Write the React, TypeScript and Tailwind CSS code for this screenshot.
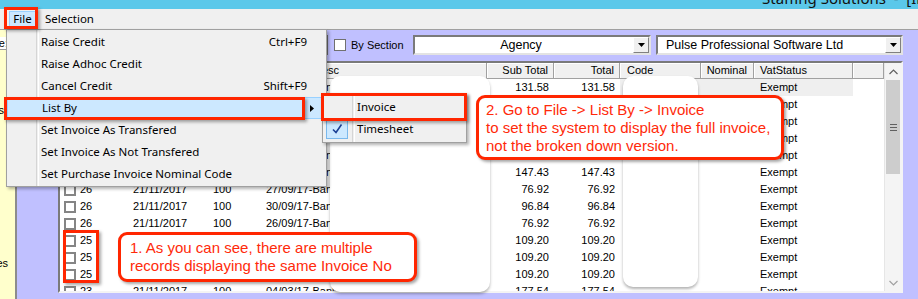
import { Fragment } from "react";

type Row = { no: string; desc: string; sub: string };

const ROWS: Row[] = [
  { no: "27", desc: "20/09/17-Bank", sub: "131.58" },
  { no: "27", desc: "21/09/17-Bank", sub: "147.43" },
  { no: "27", desc: "22/09/17-Bank", sub: "96.84" },
  { no: "27", desc: "23/09/17-Bank", sub: "76.92" },
  { no: "27", desc: "24/09/17-Bank", sub: "131.58" },
  { no: "26", desc: "25/09/17-Bank", sub: "147.43" },
  { no: "26", desc: "27/09/17-Bank", sub: "76.92" },
  { no: "26", desc: "30/09/17-Bank", sub: "96.84" },
  { no: "26", desc: "26/09/17-Bank", sub: "76.92" },
  { no: "25", desc: "01/10/17-Bank", sub: "109.20" },
  { no: "25", desc: "02/10/17-Bank", sub: "109.20" },
  { no: "25", desc: "03/10/17-Bank", sub: "109.20" },
  { no: "23", desc: "04/03/17-Bank", sub: "177.54" },
];

const HEADERS = [
  { label: "Inv No", w: "w-[68px]", cls: "pl-[5px]" },
  { label: "Date", w: "w-[75px]", cls: "pl-[5px]" },
  { label: "Hours", w: "w-[57px]", cls: "pl-[5px]" },
  { label: "Period", w: "w-[49px]", cls: "pl-[5px]" },
  { label: "Desc", w: "w-[178px]", cls: "pl-[5px]" },
  { label: "Sub Total", w: "w-[67px]", cls: "justify-end pr-[5px]" },
  { label: "Total", w: "w-[66px]", cls: "justify-end pr-[5px]" },
  { label: "Code", w: "w-[81px]", cls: "pl-[7px]" },
  { label: "Nominal", w: "w-[53px]", cls: "justify-end pr-[6px]" },
  { label: "VatStatus", w: "w-[99px]", cls: "pl-[6px]" },
  { label: "", w: "w-[31px]", cls: "" },
];

const MENU = [
  { label: "Raise Credit", key: "Ctrl+F9" },
  { label: "Raise Adhoc Credit" },
  { label: "Cancel Credit", key: "Shift+F9" },
  { label: "List By", sub: true },
  { label: "Set Invoice As Transfered" },
  { label: "Set Invoice As Not Transfered" },
  { label: "Set Purchase Invoice Nominal Code" },
];

const RED = "border-[3px] border-[#ff2600] shadow-[2px_2px_3px_rgba(0,0,0,0.35)]";

function DropButton() {
  return (
    <div className="w-[16px] h-[16px] bg-[#f0f0f0] border border-t-white border-l-white border-b-[#808080] border-r-[#808080] flex items-center justify-center">
      <svg width="7" height="4" viewBox="0 0 7 4">
        <path d="M0 0h7L3.5 4z" fill="#000" />
      </svg>
    </div>
  );
}

function Combo({ text, center, width }: { text: string; center?: boolean; width: string }) {
  return (
    <div className={`${width} h-[20px] bg-white border-2 border-t-[#7a7a7a] border-l-[#7a7a7a] border-b-[#e3e3e3] border-r-[#e3e3e3] flex items-center`}>
      <div className={`flex-1 text-[12.5px] text-black whitespace-nowrap ${center ? "text-center pr-[6px]" : "pl-[8px]"}`}>{text}</div>
      <DropButton />
    </div>
  );
}

function Check() {
  return <div className="w-[12px] h-[12px] border-2 border-[#858585] bg-white shrink-0" />;
}

export default function App() {
  return (
    <div className="relative w-[918px] h-[299px] overflow-hidden bg-[#f0f0f0] font-['Liberation_Sans',Arial,sans-serif] text-black">
      {/* title bar */}
      <div className="h-[9px] bg-[#5bc8ea] overflow-hidden">
        <div className="pl-[762px] mt-[-12px] whitespace-nowrap font-['Noto_Sans',sans-serif] text-[15px] leading-[20px] text-[#111]">
          Staffing Solutions&nbsp;&nbsp;-&nbsp;&nbsp;[Invoices]
        </div>
      </div>

      {/* menu bar */}
      <div className="h-[20px] flex items-center font-['Noto_Sans',sans-serif] text-[11.5px]">
        <div className="ml-[9px] w-[27px] h-[17px] bg-[#cce8ff] border border-[#99d1ff] flex items-center justify-center">File</div>
        <div className="ml-[9px]">Selection</div>
      </div>
      <div className="h-px bg-[#a0a0a0]" />

      {/* body */}
      <div className="flex h-[269px]">
        <div className="w-[17px] bg-[#ffffcc] border-r-2 border-[#8c8c8c] text-[11px] overflow-hidden">
          <div className="mt-[7px] h-[13px] bg-white border-b border-[#9a9a9a] flex justify-end overflow-hidden pr-[7px] leading-[13px] whitespace-nowrap">Date:</div>
          <div className="mt-[54px] flex justify-end overflow-hidden pr-[11px] leading-[13px] whitespace-nowrap">Invoices</div>
          <div className="mt-[140px] flex justify-end overflow-hidden pr-[7px] leading-[13px] whitespace-nowrap">Invoice Types</div>
        </div>

        <div className="flex-1 bg-[#c0c0ff] pl-[41px] pt-[5px]">
          {/* toolbar */}
          <div className="h-[20px] flex items-center">
            <div className="ml-[240px] w-[30px] h-[20px] bg-[#f0f0f0] border border-[#6e6e6e]" />
            <div className="w-[85px] flex items-center pl-[6px]">
              <div className="w-[12px] h-[12px] bg-white border border-[#707070]" />
              <span className="ml-[5px] text-[11px]">By Section</span>
            </div>
            <Combo text="Agency" center width="w-[238px]" />
            <div className="w-[5px]" />
            <Combo text="Pulse Professional Software Ltd" width="w-[247px]" />
          </div>

          {/* grid */}
          <div className="mt-[6px] w-[845px] h-[232px] bg-white border-2 border-t-[#7a7a7a] border-l-[#7a7a7a] border-b-[#f4f4f4] border-r-[#f4f4f4] flex overflow-hidden">
            <div className="w-[824px] overflow-hidden text-[11px]">
              <div className="flex h-[16px]">
                {HEADERS.map((h, i) => (
                  <div key={i} className={`${h.w} shrink-0 h-[16px] flex items-center bg-[#f0f0f0] border-r border-b border-[#a0a0a0] shadow-[inset_1px_1px_0_#ffffff] whitespace-nowrap ${h.cls}`}>
                    {h.label}
                  </div>
                ))}
              </div>
              {ROWS.map((r, i) => (
                <div key={i} className="flex h-[17px] leading-[17px] whitespace-nowrap">
                  <div className="w-[68px] shrink-0 flex items-center pl-[4px] gap-[4px]">
                    <Check />
                    <span>{r.no}</span>
                  </div>
                  <div className="w-[75px] shrink-0 pl-[5px]">21/11/2017</div>
                  <div className="w-[57px] shrink-0 pl-[10px]">100</div>
                  <div className="w-[227px] shrink-0 pl-[6px] overflow-hidden">{r.desc}</div>
                  <div className="w-[67px] shrink-0 text-right pr-[5px]">{r.sub}</div>
                  <div className="w-[66px] shrink-0 text-right pr-[5px]">{r.sub}</div>
                  <div className={`w-[81px] shrink-0 ${i === 0 ? "bg-[#efefef]" : ""}`} />
                  <div className={`w-[53px] shrink-0 ${i === 0 ? "bg-[#efefef]" : ""}`} />
                  <div className={`w-[99px] shrink-0 pl-[6px] ${i === 0 ? "bg-[#efefef]" : ""}`}>Exempt</div>
                  <div className="w-[31px] shrink-0" />
                </div>
              ))}
            </div>
            {/* scrollbar */}
            <div className="w-[17px] bg-[#f4f4f4] border-l border-[#e6e6e6] flex flex-col">
              <div className="h-[17px] flex items-center justify-center">
                <svg width="9" height="6" viewBox="0 0 9 6"><path d="M0.5 5L4.5 1L8.5 5" fill="none" stroke="#606060" strokeWidth="1.2" /></svg>
              </div>
              <div className="h-[94px] mx-[1px] bg-[#cdcdcd] flex flex-col items-center justify-center gap-[2px]">
                <div className="w-[7px] h-px bg-[#606060]" />
                <div className="w-[7px] h-px bg-[#606060]" />
                <div className="w-[7px] h-px bg-[#606060]" />
              </div>
              <div className="flex-1" />
              <div className="h-[17px] flex items-center justify-center">
                <svg width="9" height="6" viewBox="0 0 9 6"><path d="M0.5 1L4.5 5L8.5 1" fill="none" stroke="#a0a0a0" strokeWidth="1.2" /></svg>
              </div>
            </div>
          </div>
        </div>
      </div>

      {/* redactions */}
      <div className="absolute left-[330px] top-[76px] w-[160px] h-[216px] bg-white rounded-[10px] shadow-[0_2px_3px_rgba(0,0,0,0.3)]" />
      <div className="absolute left-[623px] top-[76px] w-[75px] h-[211px] bg-white rounded-[10px] shadow-[0_2px_3px_rgba(0,0,0,0.3)]" />

      {/* File menu */}
      <div className="absolute left-[6px] top-[29px] w-[321px] h-[158px] bg-[#f0f0f0] border border-[#a0a0a0] py-[1px] font-['Noto_Sans',sans-serif] text-[11.5px] shadow-[2px_2px_3px_rgba(0,0,0,0.3)]">
        <div className="absolute left-[29px] top-0 bottom-0 w-[2px] border-l border-[#d5d5d5] bg-transparent shadow-[1px_0_0_#ffffff]" />
        {MENU.map((m) => (
          <Fragment key={m.label}>
            <div className={`relative h-[22px] flex items-center pl-[34px] ${m.sub ? "pr-[11px] bg-[#cce8ff] border border-[#99d1ff] pl-[33px]" : "pr-[19px]"}`}>
              <span className="whitespace-nowrap">{m.label}</span>
              {m.key && <span className="ml-auto">{m.key}</span>}
              {m.sub && (
                <svg className="ml-auto" width="4" height="7" viewBox="0 0 4 7"><path d="M0 0L4 3.5L0 7z" fill="#000" /></svg>
              )}
            </div>
          </Fragment>
        ))}
      </div>

      {/* List By submenu */}
      <div className="absolute left-[322px] top-[93px] w-[145px] h-[50px] bg-[#f0f0f0] border border-[#a0a0a0] py-[2px] font-['Noto_Sans',sans-serif] text-[11.5px] shadow-[2px_2px_3px_rgba(0,0,0,0.3)]">
        <div className="absolute left-[29px] top-0 bottom-0 w-[2px] border-l border-[#d5d5d5] shadow-[1px_0_0_#ffffff]" />
        <div className="h-[22px] flex items-center pl-[34px]">Invoice</div>
        <div className="relative h-[22px] flex items-center pl-[34px]">
          <div className="absolute left-[3px] top-[1px] w-[22px] h-[20px] bg-[#cce8ff] border border-[#7ab8ec] flex items-center justify-center">
            <svg width="12" height="12" viewBox="0 0 12 12"><path d="M2 6.5L5 9.5L10.5 1.5" fill="none" stroke="#1c3f94" strokeWidth="1.6" /></svg>
          </div>
          Timesheet
        </div>
      </div>

      {/* red highlight boxes */}
      <div className={`absolute left-[4px] top-[7px] w-[34px] h-[22px] ${RED}`} />
      <div className={`absolute left-[4px] top-[97px] w-[301px] h-[23px] ${RED}`} />
      <div className={`absolute left-[321px] top-[93px] w-[146px] h-[28px] ${RED}`} />
      <div className={`absolute left-[63px] top-[230px] w-[36px] h-[53px] ${RED}`} />

      {/* callouts */}
      <div className={`absolute left-[476px] top-[95px] w-[308px] h-[65px] bg-white rounded-[9px] ${RED} pl-[7px] pt-[3px] text-[15px] leading-[18px] text-[#ff2a0a] whitespace-nowrap`}>
        <div>2. Go to File -&gt; List By -&gt; Invoice</div>
        <div>to set the system to display the full invoice,</div>
        <div>not the broken down version.</div>
      </div>
      <div className={`absolute left-[118px] top-[232px] w-[299px] h-[50px] bg-white rounded-[9px] ${RED} pl-[9px] pt-[4px] text-[15px] leading-[18px] text-[#ff2a0a] whitespace-nowrap`}>
        <div>1. As you can see, there are multiple</div>
        <div>records displaying the same Invoice No</div>
      </div>
    </div>
  );
}
